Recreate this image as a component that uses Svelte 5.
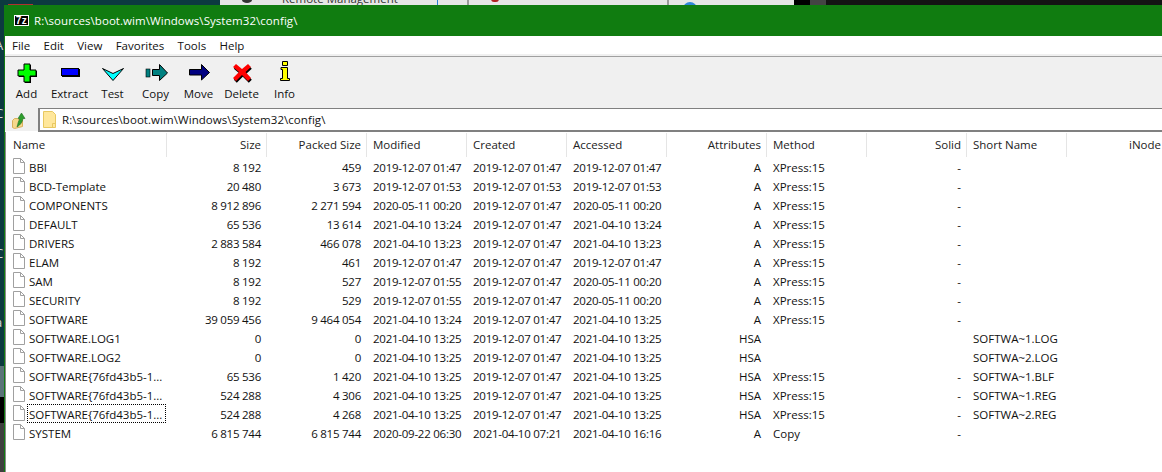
<script lang="ts">
  const menus = ['File', 'Edit', 'View', 'Favorites', 'Tools', 'Help'];
  const path = 'R:\\sources\\boot.wim\\Windows\\System32\\config\\';

  const columns = [
    { label: 'Name' },
    { label: 'Size', right: true },
    { label: 'Packed Size', right: true },
    { label: 'Modified' },
    { label: 'Created' },
    { label: 'Accessed' },
    { label: 'Attributes', right: true },
    { label: 'Method' },
    { label: 'Solid', right: true },
    { label: 'Short Name' },
    { label: 'iNode', right: true }
  ];

  const c = '2019-12-07';
  const long = 'SOFTWARE{76fd43b5-1...';
  const rows = [
    ['BBI', '8 192', '459', c + ' 01:47', c + ' 01:47', c + ' 01:47', 'A', 'XPress:15', '-', ''],
    ['BCD-Template', '20 480', '3 673', c + ' 01:53', c + ' 01:53', c + ' 01:53', 'A', 'XPress:15', '-', ''],
    ['COMPONENTS', '8 912 896', '2 271 594', '2020-05-11 00:20', c + ' 01:47', '2020-05-11 00:20', 'A', 'XPress:15', '-', ''],
    ['DEFAULT', '65 536', '13 614', '2021-04-10 13:24', c + ' 01:47', '2021-04-10 13:24', 'A', 'XPress:15', '-', ''],
    ['DRIVERS', '2 883 584', '466 078', '2021-04-10 13:23', c + ' 01:47', '2021-04-10 13:23', 'A', 'XPress:15', '-', ''],
    ['ELAM', '8 192', '461', c + ' 01:47', c + ' 01:47', c + ' 01:47', 'A', 'XPress:15', '-', ''],
    ['SAM', '8 192', '527', c + ' 01:55', c + ' 01:47', '2020-05-11 00:20', 'A', 'XPress:15', '-', ''],
    ['SECURITY', '8 192', '529', c + ' 01:55', c + ' 01:47', '2020-05-11 00:20', 'A', 'XPress:15', '-', ''],
    ['SOFTWARE', '39 059 456', '9 464 054', '2021-04-10 13:24', c + ' 01:47', '2021-04-10 13:25', 'A', 'XPress:15', '-', ''],
    ['SOFTWARE.LOG1', '0', '0', '2021-04-10 13:25', c + ' 01:47', '2021-04-10 13:25', 'HSA', '', '', 'SOFTWA~1.LOG'],
    ['SOFTWARE.LOG2', '0', '0', '2021-04-10 13:25', c + ' 01:47', '2021-04-10 13:25', 'HSA', '', '', 'SOFTWA~2.LOG'],
    [long, '65 536', '1 420', '2021-04-10 13:25', c + ' 01:47', '2021-04-10 13:25', 'HSA', 'XPress:15', '-', 'SOFTWA~1.BLF'],
    [long, '524 288', '4 306', '2021-04-10 13:25', c + ' 01:47', '2021-04-10 13:25', 'HSA', 'XPress:15', '-', 'SOFTWA~1.REG'],
    [long, '524 288', '4 268', '2021-04-10 13:25', c + ' 01:47', '2021-04-10 13:25', 'HSA', 'XPress:15', '-', 'SOFTWA~2.REG'],
    ['SYSTEM', '6 815 744', '6 815 744', '2020-09-22 06:30', '2021-04-10 07:21', '2021-04-10 16:16', 'A', 'Copy', '-', '']
  ];
  const focusedRow = 13;
</script>

<div class="desktop">
  <div class="behind">
    <div class="bg-dark" style="width: 220px"><i class="red-top"></i></div>
    <div class="bg-light" style="width: 574px">
      <span class="remote">Remote Management</span>
      <i class="person"></i>
      <i class="blue-line"></i>
      <i class="pane-line" style="left: 247px"></i>
      <i class="red-bit"></i>
      <i class="pane-line" style="left: 447px"></i>
      <i class="blue-dot"></i>
    </div>
    <div class="bg-black" style="width: 16px"></div>
    <div class="bg-grey" style="width: 16px"></div>
    <div class="bg-near" style="flex: 1"></div>
  </div>

  <div class="main">
    <div class="left-strip">
      <span class="scrap" style="top: 31px">A</span>
      <span class="scrap" style="top: 99px">C</span>
      <span class="scrap" style="top: 239px">C</span>
      <span class="scrap" style="top: 308px">a</span>
      <div class="strip-light"></div>
      <div class="strip-black"></div>
      <div class="strip-grey"></div>
    </div>

    <div class="window">
      <header class="titlebar">
        <span class="logo">7z</span>
        <span class="path">{path}</span>
      </header>

      <nav class="menubar">
        {#each menus as m}
          <span>{m}</span>
        {/each}
      </nav>

      <div class="toolbar">
        <div class="tool">
          <svg width="24" height="24" viewBox="0 0 24 24">
            <path d="M10 4h6v6h6v6h-6v6h-6v-6h-6v-6h6z" fill="#000" />
            <path d="M9 3h6v6h6v6h-6v6h-6v-6h-6v-6h6z" fill="#00ff00" stroke="#000" />
          </svg>
          <span>Add</span>
        </div>
        <div class="tool">
          <svg width="24" height="24" viewBox="0 0 24 24">
            <rect x="4" y="8" width="18" height="8" fill="#000" />
            <rect x="3.500" y="7.500" width="17" height="7" fill="#0000ff" stroke="#000" />
          </svg>
          <span>Extract</span>
        </div>
        <div class="tool">
          <svg width="24" height="24" viewBox="0 0 24 24">
            <path d="M1.500 7.500l10.500 5 10.500-5-10.500 12z" fill="#00ffff" stroke="#000" />
          </svg>
          <span>Test</span>
        </div>
        <div class="tool">
          <svg width="24" height="24" viewBox="0 0 24 24">
            <rect x="2" y="8" width="4" height="8" fill="#008080" stroke="#000" stroke-width="0.6" />
            <path d="M8.500 8.500h7v-5l8 8.500-8 7.500v-5h-7z" fill="#008080" stroke="#000" />
          </svg>
          <span>Copy</span>
        </div>
        <div class="tool">
          <svg width="24" height="24" viewBox="0 0 24 24">
            <path d="M2.500 8.500h12v-5l8 8-8 7.500v-5h-12z" fill="#000080" stroke="#000" />
          </svg>
          <span>Move</span>
        </div>
        <div class="tool">
          <svg width="24" height="24" viewBox="0 0 24 24">
            <path d="M6 4l6 5 6-5 3 3-5.500 5 5.500 6-3 3-6-6-6 6-3-3 6-6-6-5z" fill="#000" transform="translate(0.800 0.800)" />
            <path d="M6 3l6 5 6-5 3 3-5.500 5 5.500 6-3 3-6-6-6 6-3-3 6-6-6-5z" fill="#ff0000" />
          </svg>
          <span>Delete</span>
        </div>
        <div class="tool">
          <svg width="24" height="24" viewBox="0 0 24 24">
            <path d="M9.500 .5h5v4h-5zM8 6.500h6.500v11h2v2h-9v-2h2v-9h-1.500z" fill="#ffff00" stroke="#000" />
          </svg>
          <span>Info</span>
        </div>
      </div>

      <div class="addressbar">
        <button class="up" aria-label="Up">
          <svg width="20" height="20" viewBox="0 0 20 20">
            <path d="M1.500 10.500l2-2h3l1 1h4v7l-8 2-2-1z" fill="#f5d88c" stroke="#d9b05a" />
            <path d="M6 17c1-3 1-6 3-8l-2-.5L10.500 3 14 8.500h-2c-.5 3-2 6-6 8.500z" fill="#2e9e2e" stroke="#1d6d1d" stroke-width="0.6" />
          </svg>
        </button>
        <div class="address">
          <svg width="13" height="17" viewBox="0 0 13 17">
            <path d="M0.500 0.500h9l3 3v13h-12z" fill="#ffe79b" stroke="#e8c860" />
            <path d="M9.500 16.500v-4h3" fill="none" stroke="#e8c860" />
          </svg>
          <span class="path">{path}</span>
        </div>
      </div>

      <div class="list">
        <div class="row head">
          {#each columns as col}
            <div class="cell" class:right={col.right}>{col.label}</div>
          {/each}
        </div>

        {#each rows as r, i}
          <div class="row">
            <div class="cell name">
              <svg width="12" height="16" viewBox="0 0 12 16">
                <path d="M0.500 0.500h7l4 4v11h-11z" fill="#fff" stroke="#a0a0a0" />
                <path d="M7.500 0.500v4h4" fill="none" stroke="#a0a0a0" />
              </svg>
              <span class:focused={i === focusedRow}>{r[0]}</span>
            </div>
            {#each r.slice(1) as v, j}
              <div class="cell" class:right={columns[j + 1].right} class:tight={j < 5}>{v}</div>
            {/each}
            <div class="cell"></div>
          </div>
        {/each}
      </div>
    </div>
  </div>
</div>

<style>
  :global(body) {
    margin: 0;
    overflow: hidden;
  }

  .desktop {
    width: 1162px;
    height: 472px;
    display: flex;
    flex-direction: column;
    overflow: hidden;
    font-family: "Open Sans", "Noto Sans", sans-serif;
    font-size: 11.5px;
    color: #111;
  }

  .behind {
    height: 5px;
    flex: none;
    display: flex;
    overflow: hidden;
  }

  .bg-dark { background: #0c3a40; position: relative; }
  .bg-light { background: #e6e6e6; position: relative; }
  .bg-black { background: #000; }
  .bg-grey { background: #444; }
  .bg-near { background: #141414; }

  .red-top {
    position: absolute;
    left: 8px;
    top: 4px;
    width: 25px;
    height: 1px;
    background: #b03030;
  }

  .remote {
    position: absolute;
    left: 62px;
    top: -9px;
    color: #333;
    line-height: 16px;
  }

  .person {
    position: absolute;
    left: 22px;
    top: -3px;
    width: 10px;
    height: 6px;
    border-radius: 50%;
    background: #333;
  }

  .blue-line {
    position: absolute;
    left: 217px;
    top: 0;
    width: 1px;
    height: 5px;
    background: #2a7fd4;
  }

  .pane-line {
    position: absolute;
    top: 0;
    width: 2px;
    height: 5px;
    background: #9a9a9a;
  }

  .red-bit {
    position: absolute;
    left: 271px;
    top: -1px;
    width: 8px;
    height: 3px;
    background: #b02020;
    border-radius: 0 0 4px 4px;
  }

  .blue-dot {
    position: absolute;
    left: 463px;
    top: 2px;
    width: 14px;
    height: 14px;
    border-radius: 50%;
    background: #2f86d8;
  }

  .main {
    flex: 1;
    display: flex;
    min-height: 0;
  }

  .left-strip {
    width: 4px;
    flex: none;
    position: relative;
    overflow: hidden;
    background: #0c3a40;
  }

  .scrap {
    position: absolute;
    left: -5px;
    color: #d8d8d8;
    font-size: 13px;
  }

  .strip-light,
  .strip-black,
  .strip-grey {
    position: absolute;
    left: 0;
    width: 4px;
  }

  .strip-light { top: 361px; height: 31px; background: #5a7378; }
  .strip-black { top: 392px; height: 26px; background: #000; }
  .strip-grey { top: 418px; height: 49px; background: #3f3f3f; }

  .window {
    flex: 1;
    min-width: 0;
    overflow: hidden;
    background: #fff;
    border-left: 1px solid #107c10;
    display: flex;
    flex-direction: column;
  }

  .titlebar {
    height: 31px;
    flex: none;
    background: #107c10;
    color: #fff;
    display: flex;
    align-items: center;
    padding-left: 9px;
    gap: 5px;
  }

  .path {
    letter-spacing: 0.06px;
  }

  .logo {
    width: 13px;
    height: 9px;
    border: 1px solid #fff;
    background: #000;
    color: #fff;
    font-family: "Liberation Sans", sans-serif;
    font-size: 10px;
    font-weight: 700;
    line-height: 9px;
    text-align: center;
    letter-spacing: 0.5px;
  }

  .menubar {
    height: 18px;
    flex: none;
    display: flex;
    align-items: center;
    padding-left: 7px;
    gap: 13.3px;
    background: #fff;
    border-bottom: 2px solid #f0f0f0;
  }

  .toolbar {
    height: 51px;
    flex: none;
    display: flex;
    background: #f0f0f0;
    border-top: 1px solid #a0a0a0;
    border-bottom: 1px solid #808080;
  }

  .tool {
    width: 43px;
    display: flex;
    flex-direction: column;
    align-items: center;
    padding-top: 4px;
  }

  .tool svg {
    display: block;
  }

  .tool span {
    margin-top: 1px;
  }

  .addressbar {
    height: 24px;
    flex: none;
    display: flex;
    margin-top: -1px;
  }

  .up {
    width: 33px;
    height: 23px;
    padding: 0 0 0 6px;
    border: none;
    background: #f0f0f0;
    display: flex;
    align-items: center;
    justify-content: flex-start;
  }

  .address {
    flex: 1;
    border-left: 2px solid #808080;
    border-top: 1px solid #808080;
    border-bottom: 2px solid #808080;
    display: flex;
    align-items: center;
    gap: 6px;
    padding-left: 3px;
  }

  .list {
    flex: 1;
    padding-top: 1px;
    border-left: 1px solid #8a8a8a;
  }

  .row {
    display: grid;
    grid-template-columns: 160px repeat(10, 100px);
    height: 19px;
    align-items: center;
    white-space: nowrap;
  }

  .row.head {
    height: 25px;
    align-items: start;
    color: #222;
  }

  .head .cell {
    height: 24px;
    line-height: 23px;
    box-sizing: border-box;
  }

  .head .cell + .cell {
    border-left: 1px solid #e5e5e5;
    padding-left: 6px;
  }

  .cell {
    padding: 0 0 0 7px;
    overflow: hidden;
    min-width: 0;
  }

  .cell.tight {
    letter-spacing: -0.25px;
  }

  .cell.right {
    text-align: right;
    padding-right: 5px;
  }

  .cell.name {
    display: flex;
    align-items: flex-start;
    gap: 2px;
    padding-right: 0;
    overflow: visible;
    height: 19px;
  }

  .cell.name svg {
    flex: none;
  }

  .cell.name span {
    flex: 1;
    margin-top: -1px;
    padding: 2px 0 0 1px;
    line-height: 15px;
    border: 1px dotted transparent;
  }

  .cell.name span.focused {
    border-color: #000;
  }
</style>
